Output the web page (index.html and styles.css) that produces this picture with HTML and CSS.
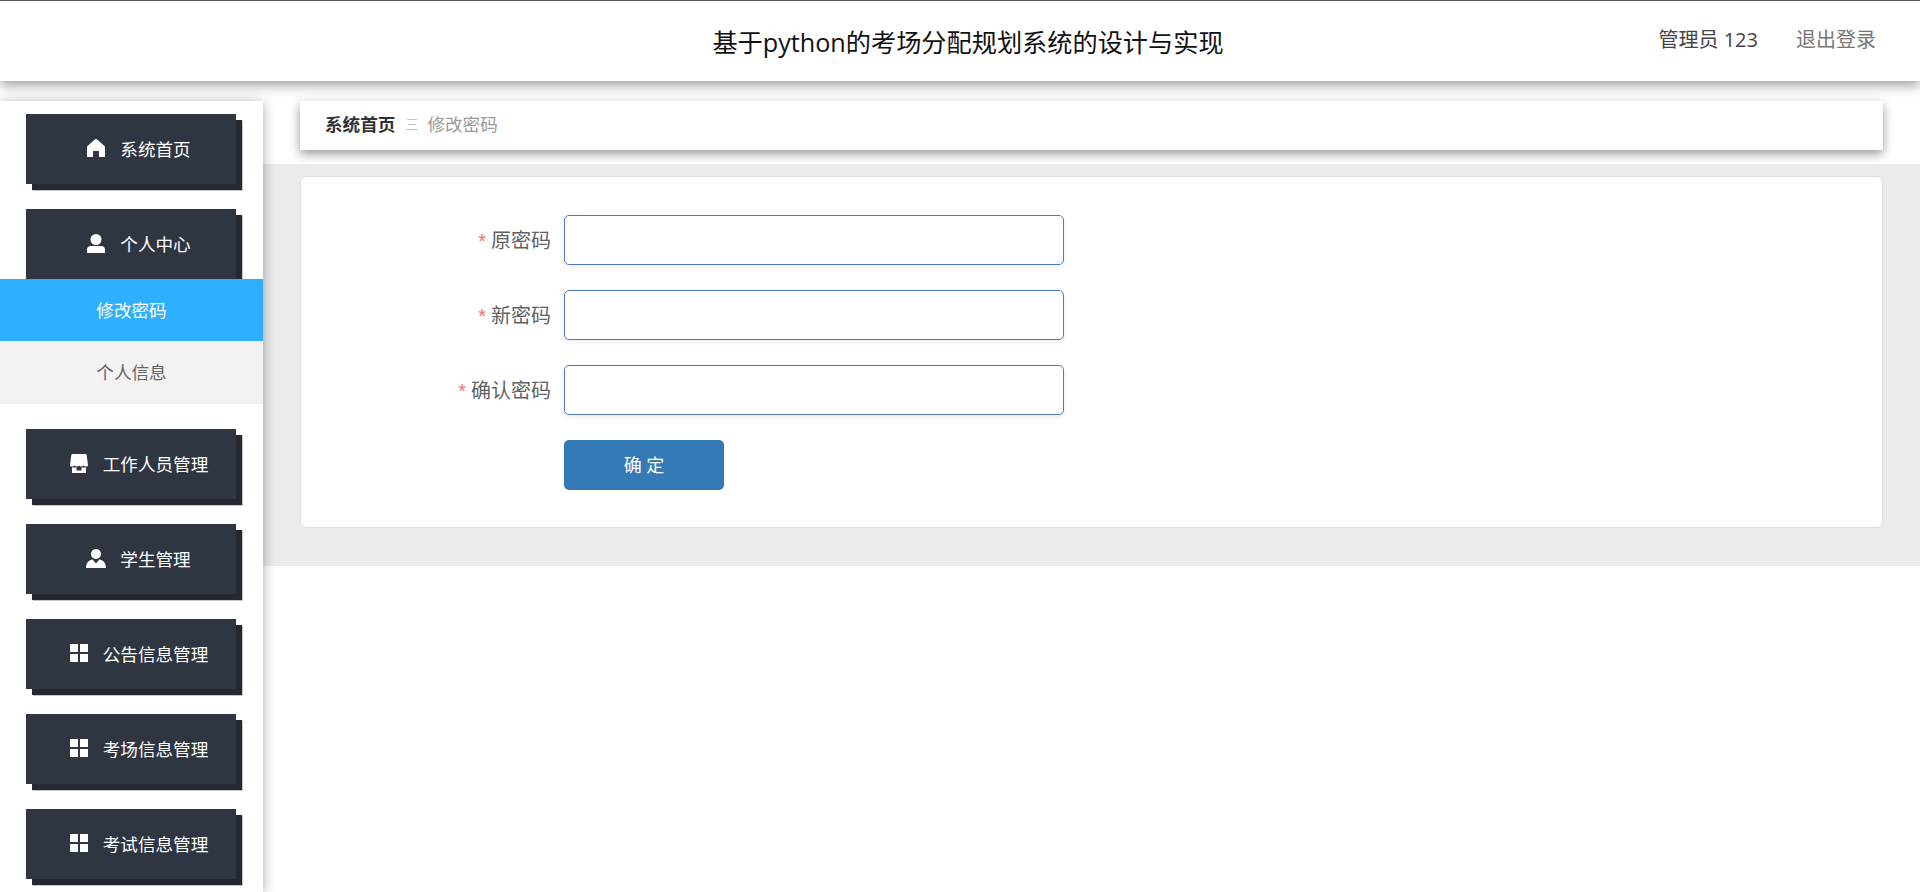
FILE: index.html
```html
<!DOCTYPE html>
<html lang="zh-CN">
<head>
<meta charset="utf-8">
<title>基于python的考场分配规划系统的设计与实现</title>
<link rel="stylesheet" href="styles.css">
</head>
<body>
<header class="topbar">
  <div class="topbar-spacer"></div>
  <h1 class="site-title">基于python的考场分配规划系统的设计与实现</h1>
  <div class="topbar-user">
    <span class="user-name">管理员 123</span>
    <a class="logout">退出登录</a>
  </div>
</header>
<div class="layout">
  <aside class="sidebar">
    <a class="menu-item">
      <svg class="menu-icon" viewBox="0 0 18 18"><path d="M9 0 C9.6 0 10 .3 10.5 .8 L18 7.6 V18 H12 V12 H6 V18 H0 V7.6 L7.5 .8 C8 .3 8.4 0 9 0 Z"/></svg>
      <span>系统首页</span>
    </a>
    <a class="menu-item menu-item-open">
      <svg class="menu-icon menu-icon-tall" viewBox="0 0 18 19"><circle cx="9" cy="5.5" r="5.5"/><path d="M0 19 V15.5 C0 13.5 1.6 12 3.6 12 H14.4 C16.4 12 18 13.5 18 15.5 V19 Z"/></svg>
      <span>个人中心</span>
    </a>
    <div class="submenu">
      <a class="submenu-item submenu-item-active">修改密码</a>
      <a class="submenu-item">个人信息</a>
    </div>
    <a class="menu-item">
      <svg class="menu-icon menu-icon-tall" viewBox="0 0 18 19"><path d="M2.6 0 H15.4 C16.2 0 16.6 .5 16.7 1.2 L18 11 C18 12.2 17 12.6 16 12.6 C15 12.6 14 12.2 13.5 11.6 C12.9 12.2 12 12.6 11.2 12.6 C10.3 12.6 9.5 12.2 9 11.6 C8.5 12.2 7.7 12.6 6.8 12.6 C6 12.6 5.1 12.2 4.5 11.6 C4 12.2 3 12.6 2 12.6 C1 12.6 0 12.2 0 11 L1.3 1.2 C1.4 .5 1.8 0 2.6 0 Z"/><path fill-rule="evenodd" d="M2 13.6 H16 V19 H2 Z M6.5 13.6 V16.6 H11.5 V13.6 Z"/></svg>
      <span>工作人员管理</span>
    </a>
    <a class="menu-item">
      <svg class="menu-icon menu-icon-wide" viewBox="0 0 20 19"><circle cx="10" cy="5" r="5"/><path d="M6.6 10.6 L10 14.6 L13.4 10.6 C16.8 11 20 13.8 20 19 H0 C0 13.8 3.2 11 6.6 10.6 Z"/></svg>
      <span>学生管理</span>
    </a>
    <a class="menu-item">
      <svg class="menu-icon" viewBox="0 0 18 18"><path d="M0 0 H8 V8 H0 Z M10 0 H18 V8 H10 Z M0 10 H8 V18 H0 Z M10 10 H18 V18 H10 Z"/></svg>
      <span>公告信息管理</span>
    </a>
    <a class="menu-item">
      <svg class="menu-icon" viewBox="0 0 18 18"><path d="M0 0 H8 V8 H0 Z M10 0 H18 V8 H10 Z M0 10 H8 V18 H0 Z M10 10 H18 V18 H10 Z"/></svg>
      <span>考场信息管理</span>
    </a>
    <a class="menu-item">
      <svg class="menu-icon" viewBox="0 0 18 18"><path d="M0 0 H8 V8 H0 Z M10 0 H18 V8 H10 Z M0 10 H8 V18 H0 Z M10 10 H18 V18 H10 Z"/></svg>
      <span>考试信息管理</span>
    </a>
  </aside>
  <main class="main">
    <nav class="breadcrumb">
      <span class="crumb-home">系统首页</span>
      <span class="crumb-sep">三</span>
      <span class="crumb-current">修改密码</span>
    </nav>
    <section class="content">
      <form class="card">
        <div class="form-row">
          <label class="form-label"><i class="required">*</i>原密码</label>
          <input class="form-input" type="password">
        </div>
        <div class="form-row">
          <label class="form-label"><i class="required">*</i>新密码</label>
          <input class="form-input" type="password">
        </div>
        <div class="form-row">
          <label class="form-label"><i class="required">*</i>确认密码</label>
          <input class="form-input" type="password">
        </div>
        <div class="form-row form-row-last">
          <span class="form-label"></span>
          <button class="submit" type="button">确 定</button>
        </div>
      </form>
    </section>
  </main>
</div>
</body>
</html>
```

FILE: styles.css
```css
* { box-sizing: border-box; }
html, body { height: 100%; margin: 0; overflow: hidden; }
body {
  background: #fff;
  font-family: "Open Sans", "Noto Sans CJK SC", sans-serif;
  color: #333;
  display: flex;
  flex-direction: column;
}
.topbar {
  flex: none;
  position: relative;
  z-index: 3;
  height: 81px;
  border-top: 1px solid #555;
  background: #fff;
  box-shadow: 0 4px 12px rgba(0, 0, 0, .4);
  display: grid;
  grid-template-columns: 1fr auto 1fr;
  align-items: center;
}
.site-title {
  margin: 0 0 0 16px;
  font-size: 25.2px;
  font-weight: 400;
  color: #111;
  white-space: nowrap;
}
.topbar-user {
  display: flex;
  justify-content: flex-end;
  align-items: center;
  gap: 38px;
  padding-right: 44px;
  font-size: 20px;
  margin-bottom: 6px;
}
.user-name { color: #444; }
.logout { color: #777; }
.layout {
  flex: 1;
  min-height: 0;
  display: flex;
  padding-top: 20px;
}
.sidebar {
  flex: none;
  position: relative;
  z-index: 2;
  width: 263px;
  padding-top: 13px;
  background: #fff;
  box-shadow: 0 2px 12px rgba(0, 0, 0, .35);
  overflow: hidden;
}
.menu-item {
  display: flex;
  align-items: center;
  justify-content: center;
  gap: 15px;
  width: 210px;
  height: 70px;
  margin: 0 0 25px 26px;
  padding: 0 0 2px 16px;
  background: #2f3541;
  box-shadow: 6px 6px 0 #252830, 7px 7px 0 #c4c6ca;
  color: #fff;
  font-size: 17.6px;
}
.menu-item-open { margin-bottom: 0; }
.menu-icon { width: 18px; height: 18px; fill: #fff; flex: none; }
.menu-icon-tall { height: 19px; }
.menu-icon-wide { width: 20px; height: 19px; margin-right: -1px; margin-left: -1px; }
.submenu { position: relative; margin-bottom: 25px; }
.submenu-item {
  display: flex;
  align-items: center;
  justify-content: center;
  height: 63px;
  padding-bottom: 2px;
  background: #f2f2f2;
  color: #666;
  font-size: 17.6px;
}
.submenu-item-active { height: 62px; background: #2eafff; color: #fff; }
.main { flex: 1; min-width: 0; display: flex; flex-direction: column; }
.breadcrumb {
  flex: none;
  position: relative;
  z-index: 1;
  height: 49px;
  margin: 0 37px;
  padding: 0 0 4px 25px;
  display: flex;
  align-items: center;
  background: #fff;
  box-shadow: 0 4px 10px rgba(0, 0, 0, .4);
  font-size: 17.6px;
}
.crumb-home { font-weight: 700; color: #303133; }
.crumb-sep { margin: 0 9px 0 10px; font-size: 13px; color: #c0c4cc; }
.crumb-current { color: #999; }
.content {
  flex: none;
  margin-top: 14px;
  padding: 12px 37px 38px;
  background: #ebebeb;
}
.card {
  height: 352px;
  padding-top: 38px;
  background: #fff;
  border: 1px solid #dcdfe6;
  border-radius: 6px;
}
.form-row { display: flex; align-items: center; gap: 13px; margin-bottom: 25px; height: 50px; }
.form-row-last { margin-bottom: 0; }
.form-label {
  flex: none;
  width: 250px;
  padding-bottom: 2px;
  text-align: right;
  font-size: 20px;
  color: #606266;
}
.required {
  font-family: "Liberation Sans", sans-serif;
  font-style: normal;
  color: #f56c6c;
  margin-right: 5px;
}
.form-input {
  width: 500px;
  height: 50px;
  padding: 0 15px;
  border: 1px solid #4f77c0;
  border-radius: 5px;
  background: #fff;
  box-shadow: 0 2px 6px rgba(0, 0, 0, .08);
  outline: none;
}
.submit {
  width: 160px;
  height: 50px;
  padding: 0 0 3px;
  border: 0;
  border-radius: 5px;
  background: #337ab7;
  color: #fff;
  font-family: inherit;
  font-size: 18px;
}
```
